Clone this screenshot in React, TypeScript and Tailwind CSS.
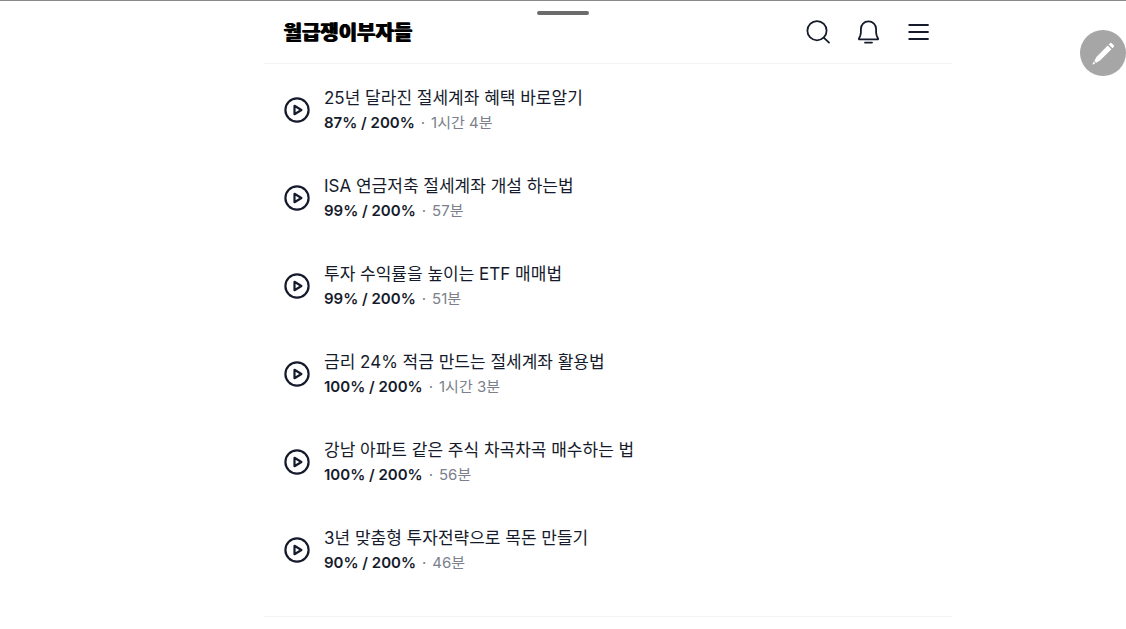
import React from "react";

type Lesson = { title: string; progress: string; duration: string };

const lessons: Lesson[] = [
  { title: "25년 달라진 절세계좌 혜택 바로알기", progress: "87% / 200%", duration: "1시간 4분" },
  { title: "ISA 연금저축 절세계좌 개설 하는법", progress: "99% / 200%", duration: "57분" },
  { title: "투자 수익률을 높이는 ETF 매매법", progress: "99% / 200%", duration: "51분" },
  { title: "금리 24% 적금 만드는 절세계좌 활용법", progress: "100% / 200%", duration: "1시간 3분" },
  { title: "강남 아파트 같은 주식 차곡차곡 매수하는 법", progress: "100% / 200%", duration: "56분" },
  { title: "3년 맞춤형 투자전략으로 목돈 만들기", progress: "90% / 200%", duration: "46분" },
];

function SearchIcon() {
  return (
    <svg viewBox="0 0 28 28" className="size-7" fill="none" stroke="currentColor" strokeWidth="1.8" strokeLinecap="round" aria-hidden="true">
      <circle cx="13" cy="12.7" r="9.6" />
      <path d="M20 19.8 25 24.6" />
    </svg>
  );
}

function BellIcon() {
  return (
    <svg viewBox="0 0 28 28" className="size-7" fill="none" stroke="currentColor" strokeWidth="1.8" strokeLinecap="round" strokeLinejoin="round" aria-hidden="true">
      <path d="M14.5 3.4C10.1 3.4 6.9 6.7 6.9 11v3.6c0 1-.3 1.9-.7 3.2L4.9 20.6c-.2.5 0 .8.6.8h18c.6 0 .8-.3.6-.8l-1.3-2.8c-.4-1.3-.7-2.2-.7-3.2V11c0-4.3-3.2-7.6-7.6-7.6Z" />
      <path d="M11 24.6h7" />
    </svg>
  );
}

function MenuIcon() {
  return (
    <svg viewBox="0 0 28 28" className="size-7" fill="none" stroke="currentColor" strokeWidth="1.8" strokeLinecap="round" aria-hidden="true">
      <path d="M5.2 7h18.8M5.2 14h18.8M5.2 21h18.8" />
    </svg>
  );
}

function PlayIcon() {
  return (
    <svg viewBox="0 0 26 26" className="size-[26px]" fill="none" stroke="currentColor" strokeWidth="2.2" strokeLinejoin="round" aria-hidden="true">
      <circle cx="13" cy="13" r="11.6" />
      <path d="M10.5 8.8v8.4l6.9-4.2Z" />
    </svg>
  );
}

function PencilIcon() {
  return (
    <svg viewBox="0 0 46 46" className="size-full" fill="#fff" aria-hidden="true">
      <g transform="translate(12.6 34.4) rotate(-45)">
        <path d="M0 0 1.8-1.1H2.6V1.1H1.8Z" />
        <path d="M3.6-1.2 8-2.6H24V2.6H8L3.6 1.2Z" />
        <path d="M25.4-2.6h1.9a1.2 1.2 0 0 1 1.2 1.2v2.8a1.2 1.2 0 0 1-1.2 1.2h-1.9Z" />
      </g>
    </svg>
  );
}

export default function App() {
  return (
    <div className="relative min-h-screen overflow-x-hidden border-t border-[#8a8a8a] bg-white font-['Inter','Noto_Sans_CJK_KR',sans-serif] text-[#161b2c]">
      <div className="absolute inset-x-0 top-2.5 mx-auto h-1 w-[52px] rounded-full bg-[#6b6b6b]" />
      <button type="button" aria-label="편집" className="absolute top-[29px] right-0 size-[46px] rounded-full bg-[#a6a6a6]">
        <PencilIcon />
      </button>

      <div className="pr-[174px] pl-[264px]">
        <header className="flex h-[63px] items-center justify-between border-b border-[#f4f4f6] px-5">
          <a href="#" className="font-['Noto_Sans_CJK_KR',sans-serif] text-xl leading-7 font-black whitespace-nowrap text-black [text-shadow:-1px_0_#000]">
            월급쟁이부자들
          </a>
          <nav className="flex gap-[22px]">
            <button type="button" aria-label="검색"><SearchIcon /></button>
            <button type="button" aria-label="알림"><BellIcon /></button>
            <button type="button" aria-label="메뉴"><MenuIcon /></button>
          </nav>
        </header>

        <main className="border-b border-[#f4f4f6] pt-0.5 pb-[22px]">
          <ul>
            {lessons.map((lesson) => (
              <li key={lesson.title}>
                <a href="#" className="flex h-[88px] items-center gap-3.5 px-5">
                  <PlayIcon />
                  <div>
                    <p className="text-[17px] leading-[26px]">{lesson.title}</p>
                    <p className="flex gap-1.5 text-[15px] leading-6 text-[#7b808c]">
                      <span className="font-semibold text-[#161b2c]">{lesson.progress}</span>
                      <span>·</span>
                      <span>{lesson.duration}</span>
                    </p>
                  </div>
                </a>
              </li>
            ))}
          </ul>
        </main>
      </div>
    </div>
  );
}
